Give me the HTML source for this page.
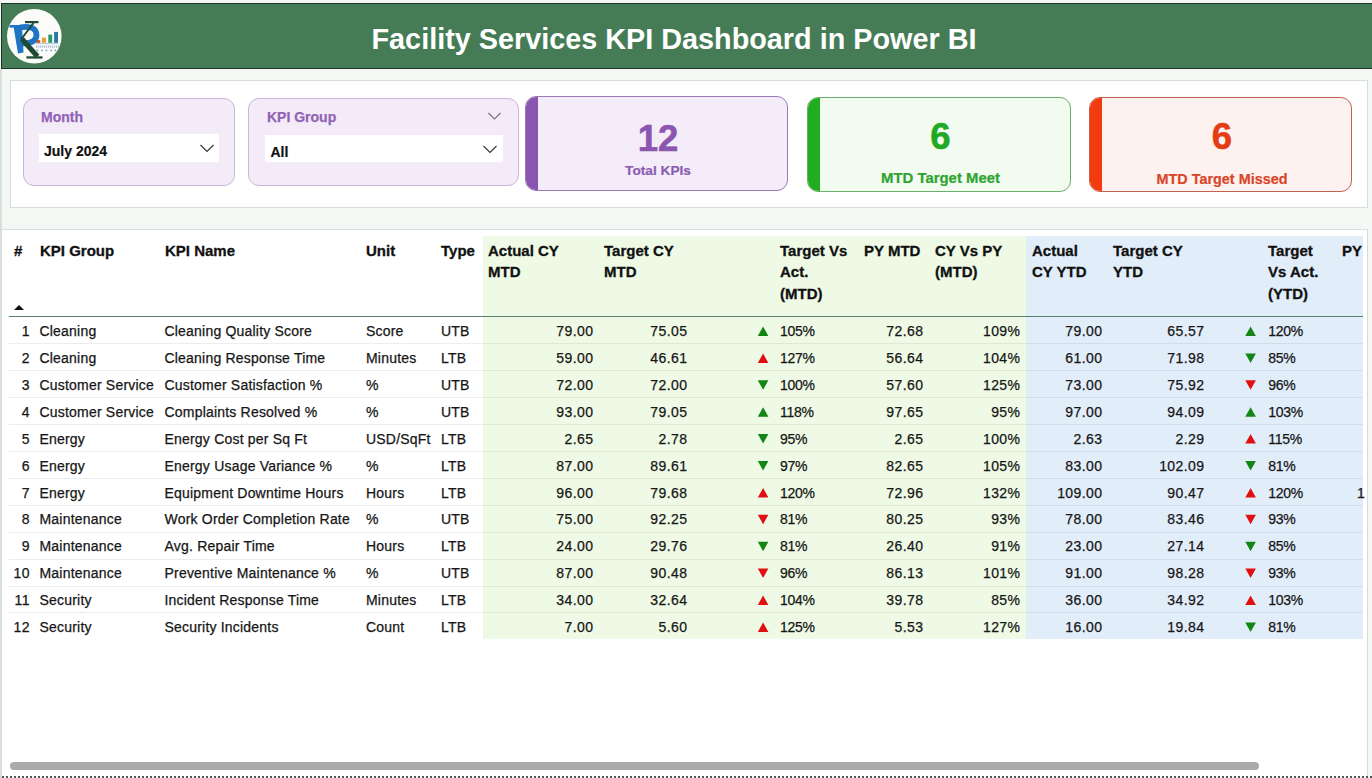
<!DOCTYPE html>
<html><head><meta charset="utf-8">
<style>
*{margin:0;padding:0;box-sizing:border-box}
html,body{width:1372px;height:778px;overflow:hidden}
body{background:#f4f8f5;font-family:"Liberation Sans",sans-serif;position:relative;-webkit-font-smoothing:antialiased}
.abs{position:absolute}
#hdr{position:absolute;left:1px;top:3px;width:1371px;height:66px;background:#467c55;border:1px solid #1d3526;border-right:none}
#title{position:absolute;left:0;top:5.5px;width:1348px;height:66px;line-height:66px;text-align:center;color:#fff;font-weight:bold;font-size:28.8px}
#panel{position:absolute;left:10px;top:80px;width:1358px;height:128px;background:#fff;border:1px solid #d8dedb}
.slicer{position:absolute;background:#f3ebf8;border:1px solid #c9b6da;border-radius:11px}
.sl-title{position:absolute;color:#9163b6;font-weight:bold;font-size:14px;white-space:nowrap;-webkit-text-stroke:0.25px #9163b6}
.dd{position:absolute;background:#fff}
.dd-txt{position:absolute;color:#111;font-weight:bold;font-size:14px;white-space:nowrap;-webkit-text-stroke:0.2px #111}
.card{position:absolute;border-radius:11px;overflow:hidden}
.card .bar{position:absolute;left:0;top:0;bottom:0;width:12px}
.card .num{position:absolute;left:0;right:0;text-align:center;font-weight:bold;white-space:nowrap;-webkit-text-stroke:0.6px currentColor}
.card .lbl{position:absolute;left:0;right:0;text-align:center;font-weight:bold;white-space:nowrap;-webkit-text-stroke:0.2px currentColor}
#tbl{position:absolute;left:2px;top:229px;width:1366px;height:549px;background:#fff;border-top:1px solid #dce3df;border-right:1px solid #d6dcd9}
.c{position:absolute;font-size:14px;line-height:26px;height:26px;color:#161616;white-space:nowrap;letter-spacing:0.2px;-webkit-text-stroke:0.25px #161616}
.r{letter-spacing:0.4px}
.p{letter-spacing:-0.3px}
.h{position:absolute;font-size:15px;font-weight:bold;line-height:21.3px;color:#111;white-space:nowrap;-webkit-text-stroke:0.3px #111}
.sep{position:absolute;left:9px;width:1354px;height:1px;background:rgba(40,60,50,0.085)}
</style></head><body>
<div id="hdr"></div>
<svg class="abs" style="left:4px;top:8px" width="60" height="60" viewBox="0 0 60 60">
 <circle cx="30.3" cy="28.2" r="27.3" fill="#fbfcfa"/>
 <path d="M5.5 17 L24 17 L24 19.6 L5.5 19.6 Z" fill="#1f74c4"/>
 <path d="M9.5 18.5 L18 18.5 L19.5 44.5 L14 45.5 Z" fill="#1f74c4"/>
 <path d="M16 19.4 C28 17.4 32.5 21 32.5 27 C32.5 33 27 35.8 18.5 35.4" stroke="#1f74c4" stroke-width="5.8" fill="none"/>
 <path d="M21 13 L34.5 13 L34.5 15.2 L21 15.2 Z" fill="#1d4a32"/>
 <path d="M29.5 15 L17 31.5" stroke="#1d4a32" stroke-width="2"/>
 <path d="M18 31 L33.5 48.5" stroke="#1d4a32" stroke-width="5"/>
 <path d="M22.4 48.3 L38.5 48.3 L38.5 50.6 L22.4 50.6 Z" fill="#1d4a32"/>
 <rect x="32.4" y="32.2" width="3.8" height="2.6" fill="#c64a28"/>
 <rect x="37.8" y="29.6" width="4.2" height="5.2" fill="#e3a03c"/>
 <rect x="44.3" y="26.6" width="3.9" height="8.2" fill="#2a9a68"/>
 <rect x="50.1" y="23.9" width="3.9" height="10.9" fill="#2a78a2"/>
 <rect x="31.5" y="35.3" width="23" height="0.8" fill="#9bb8cc"/>
 <path d="M32 38.6 L55 38.6" stroke="#3a6a9a" stroke-width="2.2" stroke-dasharray="1.2 0.8" opacity="0.4"/>
 <g fill="#4f8fc0" opacity="0.8"><circle cx="33.5" cy="42.4" r="0.9"/><circle cx="38" cy="42.4" r="0.9"/><circle cx="42.5" cy="42.4" r="0.9"/><circle cx="47" cy="42.4" r="0.9"/><circle cx="51.5" cy="42.4" r="0.9"/></g>
</svg>
<div id="title">Facility Services KPI Dashboard in Power BI</div>

<div id="panel"></div>
<div class="slicer" style="left:23px;top:98px;width:212px;height:88px"></div>
<div class="sl-title" style="left:41px;top:109px">Month</div>
<div class="dd" style="left:39px;top:134px;width:180px;height:28px"></div>
<div class="dd-txt" style="left:44px;top:142.5px">July 2024</div>
<svg class="abs" style="left:199px;top:143px" width="16" height="11"><path d="M1.5 2 L8 8.5 L14.5 2" stroke="#333" stroke-width="1.1" fill="none"/></svg>

<div class="slicer" style="left:248px;top:98px;width:271px;height:88px"></div>
<div class="sl-title" style="left:267px;top:109px">KPI Group</div>
<svg class="abs" style="left:487px;top:111px" width="15" height="10"><path d="M1.5 2 L7.5 8 L13.5 2" stroke="#777" stroke-width="1.2" fill="none"/></svg>
<div class="dd" style="left:265px;top:135px;width:238px;height:27px"></div>
<div class="dd-txt" style="left:270.5px;top:143.5px">All</div>
<svg class="abs" style="left:482px;top:144px" width="16" height="11"><path d="M1.5 2 L8 8.5 L14.5 2" stroke="#333" stroke-width="1.1" fill="none"/></svg>

<div class="card" style="left:525px;top:96px;width:263px;height:95px;background:#f4ecf9;border:1px solid #9a7ab5">
 <div class="bar" style="background:#8a55b1"></div>
 <div class="num" style="left:3px;top:21px;font-size:36.5px;color:#8a56b0">12</div>
 <div class="lbl" style="left:3px;top:65.5px;font-size:13.7px;color:#8a5db0">Total KPIs</div>
</div>
<div class="card" style="left:807px;top:97px;width:264px;height:95px;background:#f1fbf0;border:1px solid #6cae6c">
 <div class="bar" style="background:#22ac22"></div>
 <div class="num" style="left:3px;top:18px;font-size:36.5px;color:#22a822">6</div>
 <div class="lbl" style="left:3px;top:72px;font-size:14.9px;color:#2fa42f">MTD Target Meet</div>
</div>
<div class="card" style="left:1089px;top:97px;width:263px;height:95px;background:#fdf2f0;border:1px solid #c2614c">
 <div class="bar" style="background:#f23b0e"></div>
 <div class="num" style="left:3px;top:18px;font-size:36.5px;color:#e23d14">6</div>
 <div class="lbl" style="left:3px;top:73px;font-size:14.4px;color:#d9462a">MTD Target Missed</div>
</div>

<div id="tbl"></div>
<div class="abs" style="left:0;top:69px;width:2px;height:709px;background:#d8dedb"></div>
<div class="abs" style="left:483px;top:236px;width:543px;height:402.7px;background:#eefae5"></div>
<div class="abs" style="left:1026px;top:236px;width:336.5px;height:402.7px;background:#e2edfa"></div>
<div class="abs" style="left:9px;top:315.8px;width:1354px;height:1.3px;background:#5a8070"></div>
<div class="sep" style="top:343.4px"></div><div class="sep" style="top:370.3px"></div><div class="sep" style="top:397.2px"></div><div class="sep" style="top:424.1px"></div><div class="sep" style="top:451.0px"></div><div class="sep" style="top:477.9px"></div><div class="sep" style="top:504.8px"></div><div class="sep" style="top:531.7px"></div><div class="sep" style="top:558.6px"></div><div class="sep" style="top:585.5px"></div><div class="sep" style="top:612.4px"></div>

<div class="h" style="left:14px;top:240px">#</div>
<div class="h" style="left:40px;top:240px">KPI Group</div>
<div class="h" style="left:165px;top:240px">KPI Name</div>
<div class="h" style="left:366px;top:240px">Unit</div>
<div class="h" style="left:441px;top:240px">Type</div>
<div class="h" style="left:488px;top:240px">Actual CY<br>MTD</div>
<div class="h" style="left:604px;top:240px">Target CY<br>MTD</div>
<div class="h" style="left:780px;top:240px">Target Vs<br>Act.<br>(MTD)</div>
<div class="h" style="left:864px;top:240px">PY MTD</div>
<div class="h" style="left:935px;top:240px">CY Vs PY<br>(MTD)</div>
<div class="h" style="left:1032px;top:240px">Actual<br>CY YTD</div>
<div class="h" style="left:1113px;top:240px">Target CY<br>YTD</div>
<div class="h" style="left:1268px;top:240px">Target<br>Vs Act.<br>(YTD)</div>
<div class="h" style="left:1342px;top:240px">PY</div>
<svg class="abs" style="left:13px;top:304px" width="12" height="7"><polygon points="1,6 11,6 6,1" fill="#111"/></svg>

<div class="c r" style="right:1342.1px;top:318.1px">1</div><div class="c" style="left:39.5px;top:318.1px">Cleaning</div><div class="c" style="left:164.5px;top:318.1px">Cleaning Quality Score</div><div class="c" style="left:366px;top:318.1px">Score</div><div class="c" style="left:441px;top:318.1px">UTB</div><div class="c r" style="right:778.6px;top:318.1px">79.00</div><div class="c r" style="right:684.6px;top:318.1px">75.05</div><div class="c p" style="left:780px;top:318.1px">105%</div><div class="c r" style="right:448.6px;top:318.1px">72.68</div><div class="c r" style="right:351.6px;top:318.1px">109%</div><div class="c r" style="right:269.6px;top:318.1px">79.00</div><div class="c r" style="right:167.6px;top:318.1px">65.57</div><div class="c p" style="left:1268.3px;top:318.1px">120%</div><div class="c r" style="right:1342.1px;top:345.0px">2</div><div class="c" style="left:39.5px;top:345.0px">Cleaning</div><div class="c" style="left:164.5px;top:345.0px">Cleaning Response Time</div><div class="c" style="left:366px;top:345.0px">Minutes</div><div class="c" style="left:441px;top:345.0px">LTB</div><div class="c r" style="right:778.6px;top:345.0px">59.00</div><div class="c r" style="right:684.6px;top:345.0px">46.61</div><div class="c p" style="left:780px;top:345.0px">127%</div><div class="c r" style="right:448.6px;top:345.0px">56.64</div><div class="c r" style="right:351.6px;top:345.0px">104%</div><div class="c r" style="right:269.6px;top:345.0px">61.00</div><div class="c r" style="right:167.6px;top:345.0px">71.98</div><div class="c p" style="left:1268.3px;top:345.0px">85%</div><div class="c r" style="right:1342.1px;top:371.9px">3</div><div class="c" style="left:39.5px;top:371.9px">Customer Service</div><div class="c" style="left:164.5px;top:371.9px">Customer Satisfaction %</div><div class="c" style="left:366px;top:371.9px">%</div><div class="c" style="left:441px;top:371.9px">UTB</div><div class="c r" style="right:778.6px;top:371.9px">72.00</div><div class="c r" style="right:684.6px;top:371.9px">72.00</div><div class="c p" style="left:780px;top:371.9px">100%</div><div class="c r" style="right:448.6px;top:371.9px">57.60</div><div class="c r" style="right:351.6px;top:371.9px">125%</div><div class="c r" style="right:269.6px;top:371.9px">73.00</div><div class="c r" style="right:167.6px;top:371.9px">75.92</div><div class="c p" style="left:1268.3px;top:371.9px">96%</div><div class="c r" style="right:1342.1px;top:398.8px">4</div><div class="c" style="left:39.5px;top:398.8px">Customer Service</div><div class="c" style="left:164.5px;top:398.8px">Complaints Resolved %</div><div class="c" style="left:366px;top:398.8px">%</div><div class="c" style="left:441px;top:398.8px">UTB</div><div class="c r" style="right:778.6px;top:398.8px">93.00</div><div class="c r" style="right:684.6px;top:398.8px">79.05</div><div class="c p" style="left:780px;top:398.8px">118%</div><div class="c r" style="right:448.6px;top:398.8px">97.65</div><div class="c r" style="right:351.6px;top:398.8px">95%</div><div class="c r" style="right:269.6px;top:398.8px">97.00</div><div class="c r" style="right:167.6px;top:398.8px">94.09</div><div class="c p" style="left:1268.3px;top:398.8px">103%</div><div class="c r" style="right:1342.1px;top:425.7px">5</div><div class="c" style="left:39.5px;top:425.7px">Energy</div><div class="c" style="left:164.5px;top:425.7px">Energy Cost per Sq Ft</div><div class="c" style="left:366px;top:425.7px">USD/SqFt</div><div class="c" style="left:441px;top:425.7px">LTB</div><div class="c r" style="right:778.6px;top:425.7px">2.65</div><div class="c r" style="right:684.6px;top:425.7px">2.78</div><div class="c p" style="left:780px;top:425.7px">95%</div><div class="c r" style="right:448.6px;top:425.7px">2.65</div><div class="c r" style="right:351.6px;top:425.7px">100%</div><div class="c r" style="right:269.6px;top:425.7px">2.63</div><div class="c r" style="right:167.6px;top:425.7px">2.29</div><div class="c p" style="left:1268.3px;top:425.7px">115%</div><div class="c r" style="right:1342.1px;top:452.6px">6</div><div class="c" style="left:39.5px;top:452.6px">Energy</div><div class="c" style="left:164.5px;top:452.6px">Energy Usage Variance %</div><div class="c" style="left:366px;top:452.6px">%</div><div class="c" style="left:441px;top:452.6px">LTB</div><div class="c r" style="right:778.6px;top:452.6px">87.00</div><div class="c r" style="right:684.6px;top:452.6px">89.61</div><div class="c p" style="left:780px;top:452.6px">97%</div><div class="c r" style="right:448.6px;top:452.6px">82.65</div><div class="c r" style="right:351.6px;top:452.6px">105%</div><div class="c r" style="right:269.6px;top:452.6px">83.00</div><div class="c r" style="right:167.6px;top:452.6px">102.09</div><div class="c p" style="left:1268.3px;top:452.6px">81%</div><div class="c r" style="right:1342.1px;top:479.5px">7</div><div class="c" style="left:39.5px;top:479.5px">Energy</div><div class="c" style="left:164.5px;top:479.5px">Equipment Downtime Hours</div><div class="c" style="left:366px;top:479.5px">Hours</div><div class="c" style="left:441px;top:479.5px">LTB</div><div class="c r" style="right:778.6px;top:479.5px">96.00</div><div class="c r" style="right:684.6px;top:479.5px">79.68</div><div class="c p" style="left:780px;top:479.5px">120%</div><div class="c r" style="right:448.6px;top:479.5px">72.96</div><div class="c r" style="right:351.6px;top:479.5px">132%</div><div class="c r" style="right:269.6px;top:479.5px">109.00</div><div class="c r" style="right:167.6px;top:479.5px">90.47</div><div class="c p" style="left:1268.3px;top:479.5px">120%</div><div class="c r" style="right:1342.1px;top:506.4px">8</div><div class="c" style="left:39.5px;top:506.4px">Maintenance</div><div class="c" style="left:164.5px;top:506.4px">Work Order Completion Rate</div><div class="c" style="left:366px;top:506.4px">%</div><div class="c" style="left:441px;top:506.4px">UTB</div><div class="c r" style="right:778.6px;top:506.4px">75.00</div><div class="c r" style="right:684.6px;top:506.4px">92.25</div><div class="c p" style="left:780px;top:506.4px">81%</div><div class="c r" style="right:448.6px;top:506.4px">80.25</div><div class="c r" style="right:351.6px;top:506.4px">93%</div><div class="c r" style="right:269.6px;top:506.4px">78.00</div><div class="c r" style="right:167.6px;top:506.4px">83.46</div><div class="c p" style="left:1268.3px;top:506.4px">93%</div><div class="c r" style="right:1342.1px;top:533.3px">9</div><div class="c" style="left:39.5px;top:533.3px">Maintenance</div><div class="c" style="left:164.5px;top:533.3px">Avg. Repair Time</div><div class="c" style="left:366px;top:533.3px">Hours</div><div class="c" style="left:441px;top:533.3px">LTB</div><div class="c r" style="right:778.6px;top:533.3px">24.00</div><div class="c r" style="right:684.6px;top:533.3px">29.76</div><div class="c p" style="left:780px;top:533.3px">81%</div><div class="c r" style="right:448.6px;top:533.3px">26.40</div><div class="c r" style="right:351.6px;top:533.3px">91%</div><div class="c r" style="right:269.6px;top:533.3px">23.00</div><div class="c r" style="right:167.6px;top:533.3px">27.14</div><div class="c p" style="left:1268.3px;top:533.3px">85%</div><div class="c r" style="right:1342.1px;top:560.2px">10</div><div class="c" style="left:39.5px;top:560.2px">Maintenance</div><div class="c" style="left:164.5px;top:560.2px">Preventive Maintenance %</div><div class="c" style="left:366px;top:560.2px">%</div><div class="c" style="left:441px;top:560.2px">UTB</div><div class="c r" style="right:778.6px;top:560.2px">87.00</div><div class="c r" style="right:684.6px;top:560.2px">90.48</div><div class="c p" style="left:780px;top:560.2px">96%</div><div class="c r" style="right:448.6px;top:560.2px">86.13</div><div class="c r" style="right:351.6px;top:560.2px">101%</div><div class="c r" style="right:269.6px;top:560.2px">91.00</div><div class="c r" style="right:167.6px;top:560.2px">98.28</div><div class="c p" style="left:1268.3px;top:560.2px">93%</div><div class="c r" style="right:1342.1px;top:587.1px">11</div><div class="c" style="left:39.5px;top:587.1px">Security</div><div class="c" style="left:164.5px;top:587.1px">Incident Response Time</div><div class="c" style="left:366px;top:587.1px">Minutes</div><div class="c" style="left:441px;top:587.1px">LTB</div><div class="c r" style="right:778.6px;top:587.1px">34.00</div><div class="c r" style="right:684.6px;top:587.1px">32.64</div><div class="c p" style="left:780px;top:587.1px">104%</div><div class="c r" style="right:448.6px;top:587.1px">39.78</div><div class="c r" style="right:351.6px;top:587.1px">85%</div><div class="c r" style="right:269.6px;top:587.1px">36.00</div><div class="c r" style="right:167.6px;top:587.1px">34.92</div><div class="c p" style="left:1268.3px;top:587.1px">103%</div><div class="c r" style="right:1342.1px;top:614.0px">12</div><div class="c" style="left:39.5px;top:614.0px">Security</div><div class="c" style="left:164.5px;top:614.0px">Security Incidents</div><div class="c" style="left:366px;top:614.0px">Count</div><div class="c" style="left:441px;top:614.0px">LTB</div><div class="c r" style="right:778.6px;top:614.0px">7.00</div><div class="c r" style="right:684.6px;top:614.0px">5.60</div><div class="c p" style="left:780px;top:614.0px">125%</div><div class="c r" style="right:448.6px;top:614.0px">5.53</div><div class="c r" style="right:351.6px;top:614.0px">127%</div><div class="c r" style="right:269.6px;top:614.0px">16.00</div><div class="c r" style="right:167.6px;top:614.0px">19.84</div><div class="c p" style="left:1268.3px;top:614.0px">81%</div><div class="c" style="left:1357px;top:479.5px">1</div>
<svg class="abs" style="left:0;top:0" width="1372" height="778"><polygon points="757.8,336.0 768.4,336.0 763.1,326.5" fill="#128512"/><polygon points="1245.3,336.0 1255.9,336.0 1250.6,326.5" fill="#128512"/><polygon points="757.8,362.9 768.4,362.9 763.1,353.4" fill="#e01010"/><polygon points="1245.3,353.4 1255.9,353.4 1250.6,362.9" fill="#128512"/><polygon points="757.8,380.3 768.4,380.3 763.1,389.8" fill="#128512"/><polygon points="1245.3,380.3 1255.9,380.3 1250.6,389.8" fill="#e01010"/><polygon points="757.8,416.7 768.4,416.7 763.1,407.2" fill="#128512"/><polygon points="1245.3,416.7 1255.9,416.7 1250.6,407.2" fill="#128512"/><polygon points="757.8,434.1 768.4,434.1 763.1,443.6" fill="#128512"/><polygon points="1245.3,443.6 1255.9,443.6 1250.6,434.1" fill="#e01010"/><polygon points="757.8,461.0 768.4,461.0 763.1,470.5" fill="#128512"/><polygon points="1245.3,461.0 1255.9,461.0 1250.6,470.5" fill="#128512"/><polygon points="757.8,497.4 768.4,497.4 763.1,487.9" fill="#e01010"/><polygon points="1245.3,497.4 1255.9,497.4 1250.6,487.9" fill="#e01010"/><polygon points="757.8,514.8 768.4,514.8 763.1,524.3" fill="#e01010"/><polygon points="1245.3,514.8 1255.9,514.8 1250.6,524.3" fill="#e01010"/><polygon points="757.8,541.7 768.4,541.7 763.1,551.2" fill="#128512"/><polygon points="1245.3,541.7 1255.9,541.7 1250.6,551.2" fill="#128512"/><polygon points="757.8,568.6 768.4,568.6 763.1,578.1" fill="#e01010"/><polygon points="1245.3,568.6 1255.9,568.6 1250.6,578.1" fill="#e01010"/><polygon points="757.8,605.0 768.4,605.0 763.1,595.5" fill="#e01010"/><polygon points="1245.3,605.0 1255.9,605.0 1250.6,595.5" fill="#e01010"/><polygon points="757.8,631.9 768.4,631.9 763.1,622.4" fill="#e01010"/><polygon points="1245.3,622.4 1255.9,622.4 1250.6,631.9" fill="#128512"/></svg>

<div class="abs" style="left:10px;top:762px;width:1249px;height:8px;background:#adabaa;border-radius:4px"></div>
<div class="abs" style="left:2px;top:776px;width:1370px;height:2px;background:repeating-linear-gradient(90deg,#555 0 2px,transparent 2px 4px)"></div>
</body></html>
